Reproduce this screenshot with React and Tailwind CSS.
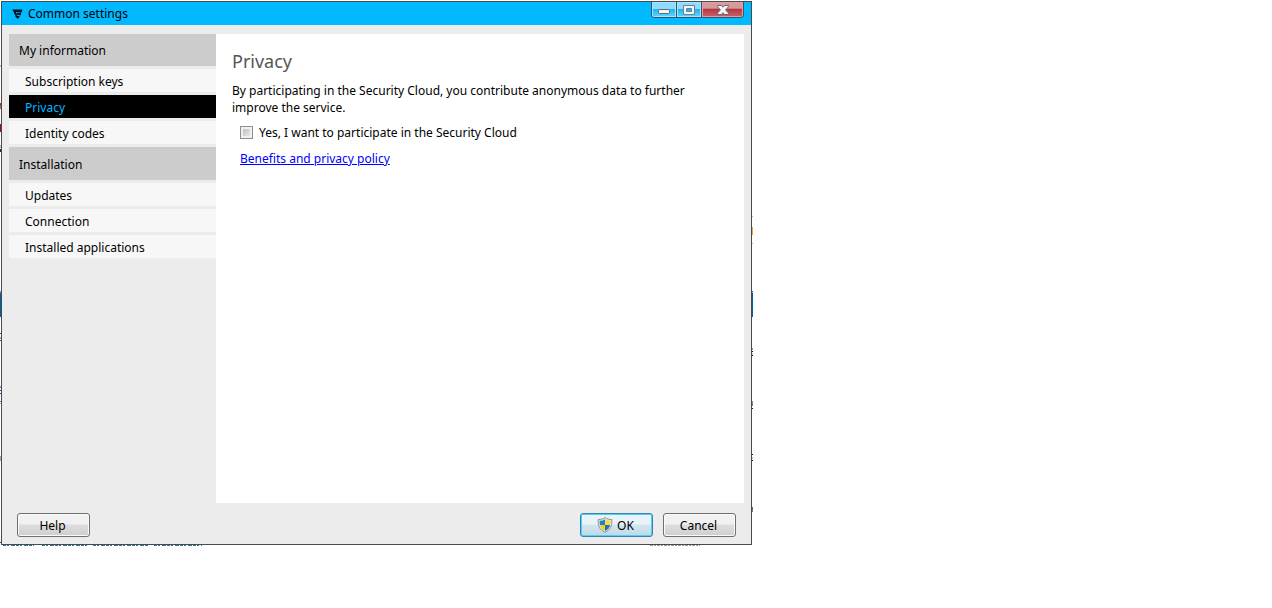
import { useState } from "react";

const sections = [
  {
    title: "My information",
    height: "h-8",
    items: ["Subscription keys", "Privacy", "Identity codes"],
  },
  {
    title: "Installation",
    height: "h-[33px] pt-0.5",
    items: ["Updates", "Connection", "Installed applications"],
  },
];

const LogoIcon = () => (
  <svg width="11" height="10" viewBox="0 0 11 10" fill="#001722" aria-hidden="true">
    <path d="M0 .2C3 1 7 .3 10.400.6L9.700 3.400C6.500 3.200 1.800 4 0 .2Z" />
    <path d="M1.600 3.600C4 4.700 6.800 4 9.300 4.100L8.300 6.500C6 6.100 3 6.700 1.600 3.600Z" />
    <path d="M3.200 6.500C4.600 7.300 6.200 6.800 7.900 7L5.900 9.900C4.800 9.300 3.800 8.200 3.200 6.500Z" />
    <path d="M1 1h3v4l2 3H4z" />
  </svg>
);

const MinimizeIcon = () => (
  <svg width="12" height="5" viewBox="0 0 12 5" aria-hidden="true">
    <rect x=".5" y=".5" width="11" height="4" rx="1" fill="#f4f4f4" stroke="#636676" />
  </svg>
);

const MaximizeIcon = () => (
  <svg width="12" height="10" viewBox="0 0 12 10" aria-hidden="true">
    <path
      d="M.5.5h11v9H.500zM3.500 3.500h5v3h-5z"
      fill="#f4f4f4"
      fillRule="evenodd"
      stroke="#6c8292"
    />
  </svg>
);

const CloseIcon = () => (
  <svg width="12" height="10" viewBox="0 0 12 10" aria-hidden="true">
    <path
      d="M.5.5h4L6 2.200 7.500.5h4v1.200L8.600 4.900l2.900 3.200v1.400h-4L6 7.700 4.500 9.500h-4V8.100l2.900-3.200L.5 1.700z"
      fill="#f6f6f6"
      stroke="#656879"
    />
  </svg>
);

const ShieldIcon = () => (
  <svg width="16" height="16" viewBox="0 0 16 16" aria-hidden="true">
    <path
      d="M8 .6C6 2 4 2.500 1.200 2.500c-.4 6 1 10.200 6.800 12.900 5.800-2.700 7.200-6.900 6.800-12.900C12 2.500 10 2 8 .6z"
      fill="#dfe3e6"
      stroke="#8f9498"
    />
    <path d="M8 2.200C6.300 3.300 4.600 3.700 2.700 3.800c-.1 1.600 0 3 .2 4.200H8z" fill="#1f82d8" />
    <path d="M8 2.200c1.700 1.100 3.400 1.500 5.300 1.600.1 1.600 0 3-.2 4.200H8z" fill="#fddc2c" />
    <path d="M2.900 8H8v6c-2.900-1.500-4.500-3.300-5.100-6z" fill="#fbcb14" />
    <path d="M13.100 8H8v6c2.900-1.500 4.500-3.300 5.100-6z" fill="#1d6fca" />
  </svg>
);

// slivers of the page that lies behind the dialog
const leftMarks = [
  [65, 2, "#b0c4d4"],
  [103, 3, "#8a5030"],
  [106, 3, "#c06a50"],
  [124, 8, "#a80c22"],
  [145, 3, "#e8b080"],
  [149, 3, "#38204c"],
  [291, 2, "#5a9cd8"],
  [293, 24, "#00619c"],
  [333, 1, "#006098"],
  [337, 2, "#70b8e0"],
  [340, 1, "#006098"],
  [386, 2, "#9090d0"],
  [390, 1, "#006098"],
  [393, 1, "#006098"],
  [401, 1, "#808080"],
  [403, 1, "#a0b8e0"],
  [456, 5, "#a8a0d0"],
  [542, 1, "#006098"],
];

const rightMarks = [
  [216, 1, "#b8b8b8"],
  [227, 8, "#f0a040"],
  [243, 1, "#b8b8b8"],
  [291, 1, "#2070b0"],
  [292, 1, "#70b0e8"],
  [293, 24, "#00619c"],
  [348, 2, "#70a8d0"],
  [351, 1, "#101020"],
  [353, 2, "#e8c890"],
  [355, 1, "#101020"],
  [401, 3, "#b08060"],
  [404, 2, "#6080a0"],
  [408, 1, "#101020"],
  [454, 1, "#101020"],
  [457, 2, "#e8c890"],
  [460, 1, "#101020"],
  [507, 3, "#806070"],
  [510, 2, "#5080b0"],
];

const Backdrop = () => (
  <svg
    className="absolute left-0 top-0 -z-10"
    width="753"
    height="547"
    aria-hidden="true"
  >
    {leftMarks.map(([y, h, fill]) => (
      <rect key={y} x="0" y={y} width="2" height={h} fill={fill} />
    ))}
    {rightMarks.map(([y, h, fill]) => (
      <rect key={y} x="751" y={y} width="2" height={h} fill={fill} />
    ))}
    <path
      d="M3 545.5H34M42 545.5H88M93 545.5H148M154 545.5H202"
      stroke="#2f7398"
      strokeDasharray="3 1 2 2 4 1"
    />
    <path d="M650 545.5H700" stroke="#9a9a9a" strokeDasharray="3 1 2 1" />
  </svg>
);

const Sidebar = ({ active, setActive }) => (
  <nav className="flex w-[207px] shrink-0 flex-col gap-[3px]">
    {sections.map((section) => (
      <div key={section.title} className="flex flex-col gap-[3px]">
        <h2 className={`flex items-center bg-[#cccccc] px-2.5 ${section.height}`}>
          {section.title}
        </h2>
        {section.items.map((item) => (
          <button
            key={item}
            type="button"
            onClick={() => setActive(item)}
            className={`flex h-[23px] items-center px-4 pt-0.5 text-left ${
              active === item ? "bg-black text-[#00b9ff]" : "bg-[#f7f7f7]"
            }`}
          >
            {item}
          </button>
        ))}
      </div>
    ))}
  </nav>
);

const DialogButton = ({ primary, children }) => (
  <button
    type="button"
    className={`flex h-6 w-[73px] items-center justify-center gap-1 rounded-[3px] border pr-0.5 ${
      primary
        ? "border-[#3c7fb1] bg-linear-to-b from-[#eaf3f8] from-45% via-[#d3e6f0] via-50% to-[#c0d9e6] shadow-[inset_0_0_0_1px_#48d3fa]"
        : "border-[#707070] bg-linear-to-b from-[#f1f1f1] from-45% via-[#dddddd] via-50% to-[#cfcfcf] shadow-[inset_0_0_0_1px_#fafafa]"
    }`}
  >
    {children}
  </button>
);

const App = () => {
  const [active, setActive] = useState("Privacy");
  const [participate, setParticipate] = useState(false);

  return (
    <div className="relative isolate p-px font-['Noto_Sans',sans-serif] text-[12px] leading-[17px] text-black">
      <Backdrop />
      <main className="flex w-full max-w-[751px] flex-col border border-[#4a4a4a] bg-[#ececec]">
        <header className="flex h-[23px] items-start justify-between bg-[#00b9ff] pr-[7px] pl-[10px]">
          <div className="flex h-full items-center gap-[5px]">
            <LogoIcon />
            <h1>Common settings</h1>
          </div>
          <div className="flex h-4 overflow-hidden rounded-b-[4px] border border-t-0 border-[#31566b]">
            <button
              type="button"
              aria-label="Minimize"
              className="flex w-[25px] items-end justify-center border-r border-[#31566b] bg-linear-to-b from-[#8fdcff] from-45% via-[#22b2f0] via-50% to-[#5cd8ff] pb-[3px] shadow-[inset_0_0_0_1px_#a5e4ff]"
            >
              <MinimizeIcon />
            </button>
            <button
              type="button"
              aria-label="Maximize"
              className="flex w-[25px] items-center justify-center border-r border-[#31566b] bg-linear-to-b from-[#8fdcff] from-45% via-[#22b2f0] via-50% to-[#5cd8ff] shadow-[inset_0_0_0_1px_#a5e4ff]"
            >
              <MaximizeIcon />
            </button>
            <button
              type="button"
              aria-label="Close"
              className="flex w-[41px] items-center justify-center bg-linear-to-b from-[#d79a9c] from-40% via-[#b23a42] via-50% to-[#cf6068] shadow-[inset_0_0_0_1px_#e0a0a4]"
            >
              <CloseIcon />
            </button>
          </div>
        </header>

        <div className="flex px-[7px] pt-[9px]">
          <Sidebar active={active} setActive={setActive} />
          <section className="flex min-h-[469px] flex-1 flex-col bg-white px-4 pt-4">
            <h2 className="text-[18px] leading-[22px] text-[#555555]">Privacy</h2>
            <p className="mt-2.5 max-w-[480px]">
              By participating in the Security Cloud, you contribute anonymous
              data to further improve the service.
            </p>
            <label className="mt-2 flex items-center gap-1.5 pl-2">
              <input
                type="checkbox"
                checked={participate}
                onChange={(e) => setParticipate(e.target.checked)}
                className="size-[13px] appearance-none border border-[#8e8f8f] bg-linear-to-br from-[#aeb5be] to-[#f4f4f4] shadow-[inset_0_0_0_2px_#f0f0f0] checked:bg-[#2a6fb5]"
              />
              Yes, I want to participate in the Security Cloud
            </label>
            <a href="#policy" className="mt-[9px] ml-2 self-start text-[#0000ff] underline">
              Benefits and privacy policy
            </a>
          </section>
        </div>

        <footer className="flex items-center justify-between px-[15px] pt-2.5 pb-[7px]">
          <DialogButton>Help</DialogButton>
          <div className="flex gap-2.5">
            <DialogButton primary>
              <ShieldIcon />
              OK
            </DialogButton>
            <DialogButton>Cancel</DialogButton>
          </div>
        </footer>
      </main>
    </div>
  );
};

export default App;
